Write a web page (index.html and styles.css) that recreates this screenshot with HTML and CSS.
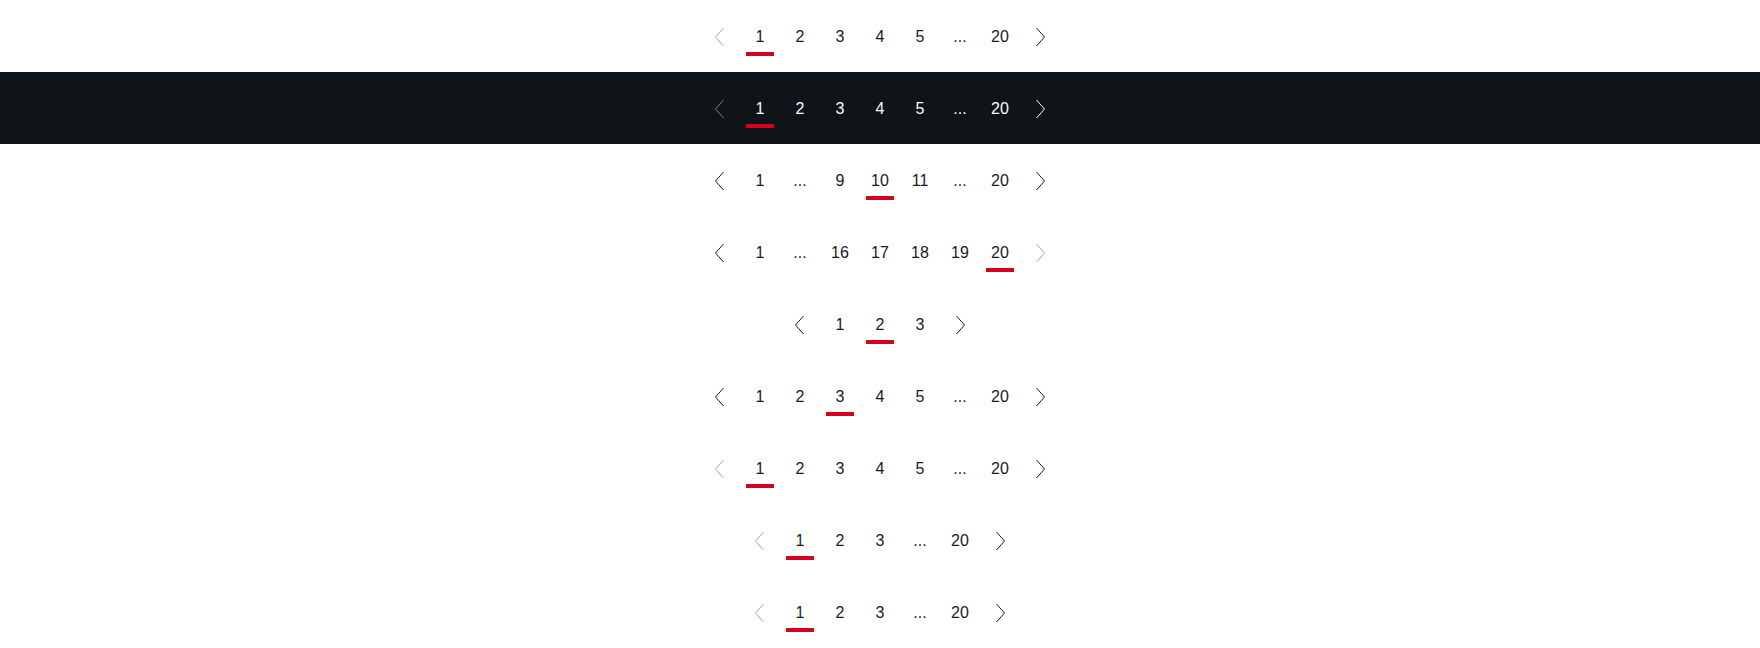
FILE: index.html
```html
<!DOCTYPE html>
<html lang="en">
<head>
<meta charset="utf-8">
<title>Pagination</title>
<link rel="stylesheet" href="styles.css">
</head>
<body>
<nav class="row"><ul class="pager">
  <li class="item disabled"><svg class="chev" viewBox="0 0 24 24"><path d="M15.5 3 7.5 12l8 9"/></svg></li>
  <li class="item active">1</li><li class="item">2</li><li class="item">3</li><li class="item">4</li><li class="item">5</li><li class="item">...</li><li class="item">20</li>
  <li class="item"><svg class="chev" viewBox="0 0 24 24"><path d="M8.5 3l8 9-8 9"/></svg></li>
</ul></nav>

<nav class="row dark"><ul class="pager">
  <li class="item disabled"><svg class="chev" viewBox="0 0 24 24"><path d="M15.5 3 7.5 12l8 9"/></svg></li>
  <li class="item active">1</li><li class="item">2</li><li class="item">3</li><li class="item">4</li><li class="item">5</li><li class="item">...</li><li class="item">20</li>
  <li class="item"><svg class="chev" viewBox="0 0 24 24"><path d="M8.5 3l8 9-8 9"/></svg></li>
</ul></nav>

<nav class="row"><ul class="pager">
  <li class="item"><svg class="chev" viewBox="0 0 24 24"><path d="M15.5 3 7.5 12l8 9"/></svg></li>
  <li class="item">1</li><li class="item">...</li><li class="item">9</li><li class="item active">10</li><li class="item">11</li><li class="item">...</li><li class="item">20</li>
  <li class="item"><svg class="chev" viewBox="0 0 24 24"><path d="M8.5 3l8 9-8 9"/></svg></li>
</ul></nav>

<nav class="row"><ul class="pager">
  <li class="item"><svg class="chev" viewBox="0 0 24 24"><path d="M15.5 3 7.5 12l8 9"/></svg></li>
  <li class="item">1</li><li class="item">...</li><li class="item">16</li><li class="item">17</li><li class="item">18</li><li class="item">19</li><li class="item active">20</li>
  <li class="item disabled"><svg class="chev" viewBox="0 0 24 24"><path d="M8.5 3l8 9-8 9"/></svg></li>
</ul></nav>

<nav class="row"><ul class="pager">
  <li class="item"><svg class="chev" viewBox="0 0 24 24"><path d="M15.5 3 7.5 12l8 9"/></svg></li>
  <li class="item">1</li><li class="item active">2</li><li class="item">3</li>
  <li class="item"><svg class="chev" viewBox="0 0 24 24"><path d="M8.5 3l8 9-8 9"/></svg></li>
</ul></nav>

<nav class="row"><ul class="pager">
  <li class="item"><svg class="chev" viewBox="0 0 24 24"><path d="M15.5 3 7.5 12l8 9"/></svg></li>
  <li class="item">1</li><li class="item">2</li><li class="item active">3</li><li class="item">4</li><li class="item">5</li><li class="item">...</li><li class="item">20</li>
  <li class="item"><svg class="chev" viewBox="0 0 24 24"><path d="M8.5 3l8 9-8 9"/></svg></li>
</ul></nav>

<nav class="row"><ul class="pager">
  <li class="item disabled"><svg class="chev" viewBox="0 0 24 24"><path d="M15.5 3 7.5 12l8 9"/></svg></li>
  <li class="item active">1</li><li class="item">2</li><li class="item">3</li><li class="item">4</li><li class="item">5</li><li class="item">...</li><li class="item">20</li>
  <li class="item"><svg class="chev" viewBox="0 0 24 24"><path d="M8.5 3l8 9-8 9"/></svg></li>
</ul></nav>

<nav class="row"><ul class="pager">
  <li class="item disabled"><svg class="chev" viewBox="0 0 24 24"><path d="M15.5 3 7.5 12l8 9"/></svg></li>
  <li class="item active">1</li><li class="item">2</li><li class="item">3</li><li class="item">...</li><li class="item">20</li>
  <li class="item"><svg class="chev" viewBox="0 0 24 24"><path d="M8.5 3l8 9-8 9"/></svg></li>
</ul></nav>

<nav class="row"><ul class="pager">
  <li class="item disabled"><svg class="chev" viewBox="0 0 24 24"><path d="M15.5 3 7.5 12l8 9"/></svg></li>
  <li class="item active">1</li><li class="item">2</li><li class="item">3</li><li class="item">...</li><li class="item">20</li>
  <li class="item"><svg class="chev" viewBox="0 0 24 24"><path d="M8.5 3l8 9-8 9"/></svg></li>
</ul></nav>
</body>
</html>
```

FILE: styles.css
```css
html, body {
  margin: 0;
  padding: 0;
  background: #ffffff;
}

body {
  font-family: "Liberation Sans", Arial, sans-serif;
  font-size: 16px;
  color: #1a1b1e;
}

.row {
  display: flex;
  justify-content: center;
  padding: 16px 0;
  height: 40px;
}

.row.dark {
  background: #0e1418;
  color: #fbfcff;
}

.pager {
  display: flex;
  list-style: none;
  margin: 0;
  padding: 0;
}

.item {
  position: relative;
  width: 40px;
  height: 40px;
  box-sizing: border-box;
  padding-top: 1px;
  display: flex;
  align-items: center;
  justify-content: center;
  line-height: 24px;
}

.item.active::after {
  content: "";
  position: absolute;
  left: 6px;
  right: 6px;
  bottom: 0;
  height: 4px;
  background: #d5001c;
}

.chev {
  width: 24px;
  height: 24px;
  fill: none;
  stroke: currentColor;
  stroke-width: 1;
  stroke-linejoin: miter;
}

.item.disabled {
  color: #a6a7a9;
}

.dark .item.disabled {
  color: #7c7f81;
}
```
